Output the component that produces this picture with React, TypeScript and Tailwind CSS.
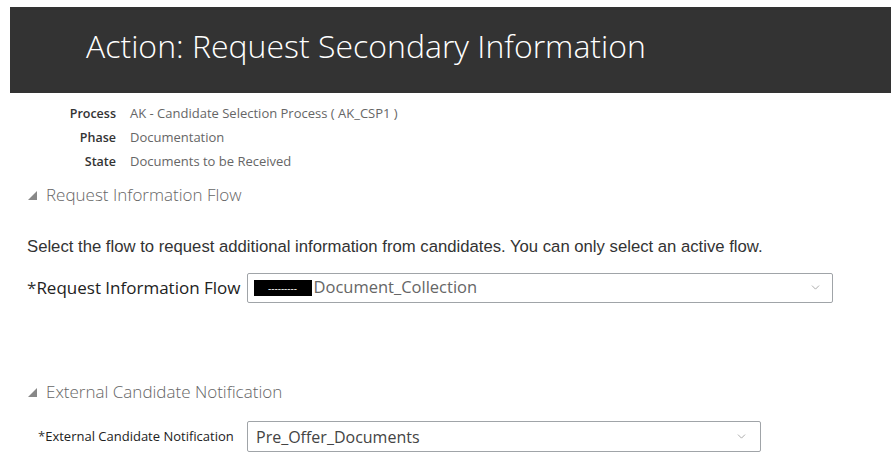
import { ChevronDown } from 'lucide-react';

const details = [
  { label: 'Process', value: 'AK - Candidate Selection Process ( AK_CSP1 )' },
  { label: 'Phase', value: 'Documentation' },
  { label: 'State', value: 'Documents to be Received' },
];

function SectionTitle({ text }: { text: string }) {
  return (
    <div className="flex items-center gap-[9px] pl-[28px] text-[17px] font-light text-[#666]">
      <svg width="9" height="9" viewBox="0 0 9 9" className="mt-[2px]">
        <polygon points="9,0 9,9 0,9" fill="#888" />
      </svg>
      <span>{text}</span>
    </div>
  );
}

export default function App() {
  return (
    <div className="min-h-screen bg-white pt-[7px] font-['Open_Sans',sans-serif]">
      {/* Header */}
      <div className="ml-[10px] h-[86px] bg-[#333] flex items-center pl-[76px] pb-[8px]">
        <h1 className="text-[32px] font-light text-white">
          Action: Request Secondary Information
        </h1>
      </div>

      {/* Details */}
      <div className="mt-[12px] flex flex-col gap-[7px] text-[12.5px]">
        {details.map((d) => (
          <div key={d.label} className="flex items-center leading-[17px]">
            <span className="w-[116px] text-right font-semibold text-[#333]">{d.label}</span>
            <span className="ml-[14px] text-[13px] text-[#666]">{d.value}</span>
          </div>
        ))}
      </div>

      <div className="mt-[12px]">
        <SectionTitle text="Request Information Flow" />
      </div>

      <p className="mt-[26px] pl-[27px] font-['Liberation_Sans',sans-serif] text-[16.7px] text-[#333]">
        Select the flow to request additional information from candidates. You can only select an active flow.
      </p>

      <div className="mt-[14px] flex items-center pl-[27px]">
        <label className="text-[17px] text-[#222] font-medium">
          <span className="text-[#333]">*</span>Request Information Flow
        </label>
        <div className="ml-[6px] flex h-[30px] w-[586px] items-center rounded-[2px] border border-[#a0a4a8] px-[6px]">
          <span className="flex h-[16px] w-[58px] items-center justify-center bg-black text-[10px] leading-none text-white">
            ---------
          </span>
          <span className="ml-[2px] text-[16.5px] text-[#666]">Document_Collection</span>
          <ChevronDown className="ml-auto mr-[4px] h-[13px] w-[13px] text-[#999]" strokeWidth={1.5} />
        </div>
      </div>

      <div className="mt-[76px]">
        <SectionTitle text="External Candidate Notification" />
      </div>

      <div className="mt-[17px] flex items-center pl-[38px]">
        <label className="w-[209px] text-[13px] text-[#222]">
          <span className="text-[#333]">*</span>External Candidate Notification
        </label>
        <div className="flex h-[31px] w-[514px] items-center rounded-[2px] border border-[#a0a4a8] px-[8px]">
          <span className="text-[16px] text-[#444]">Pre_Offer_Documents</span>
          <ChevronDown className="ml-auto mr-[4px] h-[13px] w-[13px] text-[#999]" strokeWidth={1.5} />
        </div>
      </div>
    </div>
  );
}
